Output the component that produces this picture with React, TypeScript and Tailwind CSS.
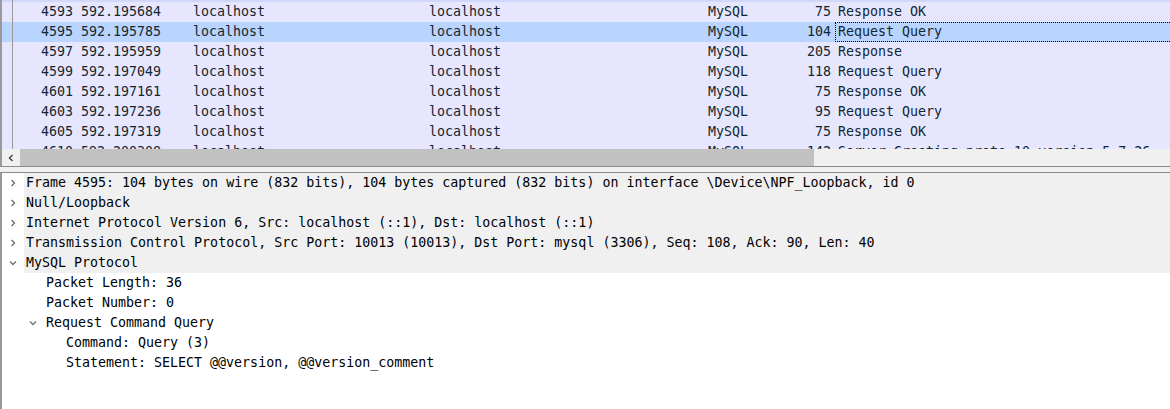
import React from 'react';

type Packet = {
  no: string;
  time: string;
  src: string;
  dst: string;
  proto: string;
  len: string;
  info: string;
  selected?: boolean;
};

const PACKETS: Packet[] = [
  { no: '4593', time: '592.195684', src: 'localhost', dst: 'localhost', proto: 'MySQL', len: '75', info: 'Response OK' },
  { no: '4595', time: '592.195785', src: 'localhost', dst: 'localhost', proto: 'MySQL', len: '104', info: 'Request Query', selected: true },
  { no: '4597', time: '592.195959', src: 'localhost', dst: 'localhost', proto: 'MySQL', len: '205', info: 'Response' },
  { no: '4599', time: '592.197049', src: 'localhost', dst: 'localhost', proto: 'MySQL', len: '118', info: 'Request Query' },
  { no: '4601', time: '592.197161', src: 'localhost', dst: 'localhost', proto: 'MySQL', len: '75', info: 'Response OK' },
  { no: '4603', time: '592.197236', src: 'localhost', dst: 'localhost', proto: 'MySQL', len: '95', info: 'Request Query' },
  { no: '4605', time: '592.197319', src: 'localhost', dst: 'localhost', proto: 'MySQL', len: '75', info: 'Response OK' },
  { no: '4610', time: '592.200308', src: 'localhost', dst: 'localhost', proto: 'MySQL', len: '142', info: 'Server Greeting proto=10 version=5.7.26' },
];

type Node = { depth: number; text: string; state: 'open' | 'closed' | 'leaf'; shaded?: boolean };

const TREE: Node[] = [
  { depth: 0, state: 'closed', shaded: true, text: 'Frame 4595: 104 bytes on wire (832 bits), 104 bytes captured (832 bits) on interface \\Device\\NPF_Loopback, id 0' },
  { depth: 0, state: 'closed', shaded: true, text: 'Null/Loopback' },
  { depth: 0, state: 'closed', shaded: true, text: 'Internet Protocol Version 6, Src: localhost (::1), Dst: localhost (::1)' },
  { depth: 0, state: 'closed', shaded: true, text: 'Transmission Control Protocol, Src Port: 10013 (10013), Dst Port: mysql (3306), Seq: 108, Ack: 90, Len: 40' },
  { depth: 0, state: 'open', shaded: true, text: 'MySQL Protocol' },
  { depth: 1, state: 'leaf', text: 'Packet Length: 36' },
  { depth: 1, state: 'leaf', text: 'Packet Number: 0' },
  { depth: 1, state: 'open', text: 'Request Command Query' },
  { depth: 2, state: 'leaf', text: 'Command: Query (3)' },
  { depth: 2, state: 'leaf', text: 'Statement: SELECT @@version, @@version_comment' },
];

function Chevron({ open }: { open: boolean }) {
  return open ? (
    <svg width="8" height="6" viewBox="0 0 8 6" fill="none" stroke="#707070" strokeWidth={1.4}>
      <polyline points="1,1.5 4,4.5 7,1.5" />
    </svg>
  ) : (
    <svg width="6" height="8" viewBox="0 0 6 8" fill="none" stroke="#707070" strokeWidth={1.4}>
      <polyline points="1.5,1 4.5,4 1.5,7" />
    </svg>
  );
}

function PacketRow({ p }: { p: Packet }) {
  return (
    <div className={`flex h-[20px] shrink-0 leading-[20px] whitespace-pre ${p.selected ? 'bg-[#b9d4fe]' : 'bg-[#e7e6ff]'}`}>
      <span className="w-[10px] shrink-0" />
      <span className="w-px shrink-0 bg-[#9a9a9a]" />
      <span className="w-[64px] shrink-0 pr-[4px] text-right">{p.no}</span>
      <span className="w-[112px] shrink-0 pl-[4px]">{p.time}</span>
      <span className="w-[236px] shrink-0 pl-[4px]">{p.src}</span>
      <span className="w-[279px] shrink-0 pl-[4px]">{p.dst}</span>
      <span className="w-[71px] shrink-0 pl-[4px]">{p.proto}</span>
      <span className="w-[60px] shrink-0 pr-[4px] text-right">{p.len}</span>
      <span
        className={`flex-1 overflow-hidden ${
          p.selected ? 'border-y border-l border-dotted border-black pl-[2px] leading-[18px]' : 'pl-[3px]'
        }`}
      >
        {p.info}
      </span>
    </div>
  );
}

export default function App() {
  return (
    <div className="w-[1170px] h-[409px] overflow-hidden bg-white font-['DejaVu_Sans_Mono','Liberation_Mono',monospace] text-[13.3px] flex flex-col">
      {/* Packet list */}
      <div className="flex flex-col h-[149px] shrink-0 overflow-hidden border-l-2 border-[#9a9a9a] text-[#12272e]">
        <div className="flex h-[2px] shrink-0 bg-[#d0d7fb]">
          <span className="w-[10px] shrink-0" />
          <span className="w-px shrink-0 bg-[#9a9a9a]" />
        </div>
        {PACKETS.map((p) => (
          <PacketRow key={p.no} p={p} />
        ))}
      </div>

      {/* Horizontal scrollbar */}
      <div className="flex h-[17px] shrink-0 border-l-2 border-[#9a9a9a] bg-[#f0f0f0]">
        <div className="w-[18px] shrink-0 flex items-center justify-center">
          <svg width="6" height="8" viewBox="0 0 6 8" fill="none" stroke="#404040" strokeWidth={1.4}>
            <polyline points="4.5,1 1.5,4 4.5,7" />
          </svg>
        </div>
        <div className="w-[794px] shrink-0 bg-[#c1c1c1]" />
        <div className="flex-1" />
      </div>

      {/* Splitter */}
      <div className="h-[7px] shrink-0 border-y border-[#8c8c8c] bg-[#f0f0f0]" />

      {/* Packet details */}
      <div className="flex-1 flex flex-col border-l-2 border-[#9a9a9a] text-black">
        {TREE.map((n, i) => (
          <div key={i} className="flex h-[20px] shrink-0 leading-[20px] whitespace-pre">
            <span className="shrink-0" style={{ width: n.depth * 20 }} />
            <span className="w-[22px] shrink-0 flex items-center justify-center">
              {n.state !== 'leaf' && <Chevron open={n.state === 'open'} />}
            </span>
            <span className={`flex-1 pl-[2px] ${n.shaded ? 'bg-[#f0f0f0]' : ''}`}>{n.text}</span>
          </div>
        ))}
      </div>
    </div>
  );
}
